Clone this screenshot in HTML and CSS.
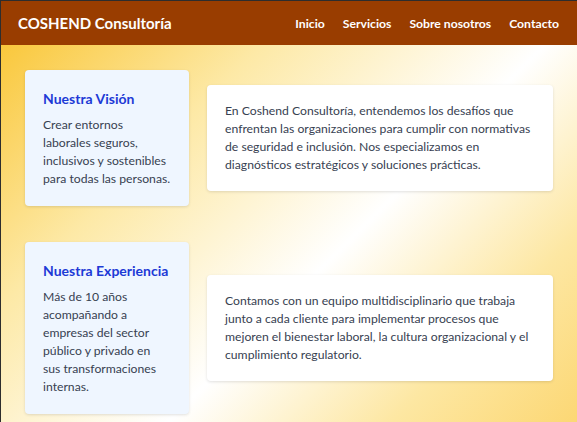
FILE: index.html
```html
<!DOCTYPE html>
<html lang="es">
<head>
<meta charset="utf-8">
<title>COSHEND Consultoría</title>
<link rel="stylesheet" href="styles.css">
</head>
<body>
<div class="frame">
  <header class="topbar">
    <div class="brand">COSHEND Consultoría</div>
    <nav class="nav">
      <a href="#">Inicio</a>
      <a href="#">Servicios</a>
      <a href="#">Sobre nosotros</a>
      <a href="#">Contacto</a>
    </nav>
  </header>
  <main class="main">
    <section class="row">
      <div class="card card-side">
        <h2>Nuestra Visión</h2>
        <p>Crear entornos laborales seguros, inclusivos y sostenibles para todas las personas.</p>
      </div>
      <div class="card card-main">
        <p>En Coshend Consultoría, entendemos los desafíos que enfrentan las organizaciones para cumplir con normativas de seguridad e inclusión. Nos especializamos en diagnósticos estratégicos y soluciones prácticas.</p>
      </div>
    </section>
    <section class="row">
      <div class="card card-side">
        <h2>Nuestra Experiencia</h2>
        <p>Más de 10 años acompañando a empresas del sector público y privado en sus&nbsp;transformaciones internas.</p>
      </div>
      <div class="card card-main">
        <p>Contamos con un equipo multidisciplinario que trabaja junto a cada cliente para implementar procesos que mejoren el bienestar laboral, la cultura organizacional y el cumplimiento regulatorio.</p>
      </div>
    </section>
  </main>
</div>
</body>
</html>
```

FILE: styles.css
```css
html, body {
  margin: 0;
  padding: 0;
}
body {
  font-family: Lato, "Noto Sans", sans-serif;
  color: #374151;
  background: #2d2d2d;
}
.frame {
  border-top: 1px solid #2d2d2d;
  border-left: 1px solid #2d2d2d;
  min-height: 421px;
  background: linear-gradient(135deg, #f9c22a 0%, #fde9a6 30%, #ffffff 58%, #fde7a2 80%, #fcd670 100%);
  display: flex;
  flex-direction: column;
}
.topbar {
  background: #993d00;
  height: 44px;
  display: flex;
  align-items: center;
  justify-content: space-between;
  padding: 0 18px 0 17px;
  color: #fff;
}
.brand {
  font-size: 15px;
  font-weight: 700;
}
.nav {
  display: flex;
  gap: 18px;
}
.nav a {
  color: #fff;
  text-decoration: none;
  font-size: 12.2px;
  font-weight: 700;
}
.main {
  padding: 25px 24px 25px 24px;
  display: flex;
  flex-direction: column;
  gap: 36px;
}
.row {
  display: flex;
  align-items: center;
  gap: 18px;
}
.card {
  border-radius: 4px;
  box-shadow: 0 1px 3px rgba(0,0,0,0.12);
  padding: 17px 18px;
  font-size: 12.2px;
  line-height: 18px;
}
.card p {
  margin: 0;
}
.card-side {
  background: #eff6ff;
  width: 128px;
  flex: none;
  padding-top: 20px;
  padding-bottom: 18px;
}
.card-side h2 {
  margin: 0 0 8px;
  font-size: 14px;
  line-height: 18px;
  color: #1d3ad6;
  font-weight: 700;
}
.card-main {
  background: #fff;
  flex: 1;
  padding: 17px 18px;
}
```
